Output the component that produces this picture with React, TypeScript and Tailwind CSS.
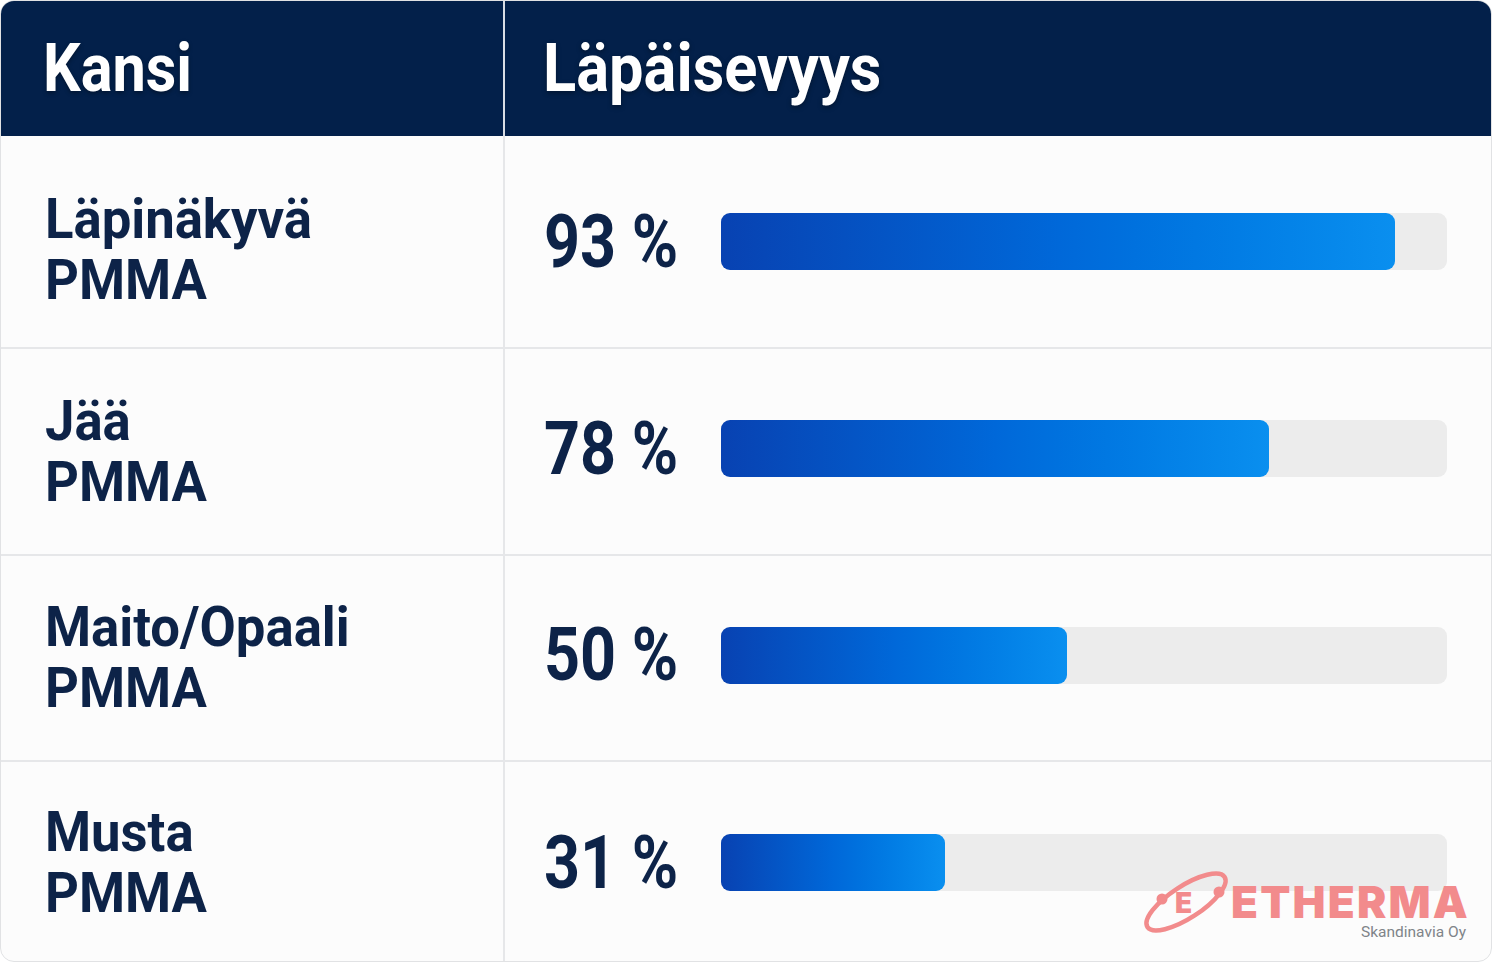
import React from "react";

const rows = [
  { l1: "Läpinäkyvä", l2: "PMMA", pct: "93 %", w: 92.8, h: "h-[213px]", lp: "pt-[16px]", rp: "" },
  { l1: "Jää", l2: "PMMA", pct: "78 %", w: 75.5, h: "h-[207px]", lp: "", rp: "pb-[6px]" },
  { l1: "Maito/Opaali", l2: "PMMA", pct: "50 %", w: 47.6, h: "h-[206px]", lp: "", rp: "pb-[6px]" },
  { l1: "Musta", l2: "PMMA", pct: "31 %", w: 30.9, h: "h-[201px]", lp: "", rp: "" },
];

function Logo() {
  return (
    <div className="absolute left-[1139px] top-[859px] w-[330px] h-[85px]">
      <svg width="100" height="80" viewBox="0 0 100 80" className="absolute left-0 top-0">
        <ellipse cx="46" cy="42" rx="46" ry="16" transform="rotate(-33 46 42)" fill="none" stroke="#f28b8c" strokeWidth="4.5" />
        <circle cx="22" cy="39" r="5.5" fill="#f28b8c" />
        <circle cx="79" cy="32" r="5.5" fill="#f28b8c" />
      </svg>
      <span className="absolute left-[35px] top-[29px] text-[28px] leading-none font-black text-[#f28b8c] [font-family:Inter,'Noto_Sans',sans-serif]">E</span>
      <span className="absolute left-[91px] top-[22px] text-[44px] leading-[40px] font-black tracking-[2.2px] text-[#f28b8c] [font-family:Inter,'Noto_Sans',sans-serif]">ETHERMA</span>
      <span className="absolute right-[4px] top-[65px] text-[15.5px] leading-none text-[#7f8489] [font-family:Roboto,sans-serif] whitespace-nowrap">Skandinavia Oy</span>
    </div>
  );
}

export default function App() {
  return (
    <div className="w-[1492px] h-[962px] bg-white [font-family:Roboto,'Liberation_Sans',sans-serif]">
      <div className="relative w-[1492px] h-[962px] rounded-[14px] border border-[#e1e2e4] overflow-hidden bg-[#fcfcfc]">
        <div className="flex h-[135px] bg-[#03204a] text-white">
          <div className="w-[504px] shrink-0 border-r-2 border-[#d8dce4] flex items-center pl-[42px]">
            <span className="inline-block origin-left scale-x-[0.9] text-[66px] font-bold leading-none [text-shadow:0_2px_5px_rgba(0,0,0,0.35)]">Kansi</span>
          </div>
          <div className="flex-1 flex items-center pl-[38px]">
            <span className="inline-block origin-left scale-x-[0.93] text-[66px] font-bold leading-none [text-shadow:0_2px_5px_rgba(0,0,0,0.35)]">Läpäisevyys</span>
          </div>
        </div>
        {rows.map((r, i) => (
          <div key={i} className={`flex ${r.h} ${i < rows.length - 1 ? "border-b-2 border-[#e6e7e9]" : ""}`}>
            <div className={`w-[504px] shrink-0 border-r-2 border-[#e6e7e9] flex flex-col justify-center pl-[44px] text-[#0d2348] ${r.lp}`}>
              <span className="inline-block origin-left scale-x-[0.94] text-[56px] font-bold leading-[61px] whitespace-nowrap">{r.l1}</span>
              <span className="inline-block origin-left scale-x-[0.94] text-[56px] font-bold leading-[61px]">{r.l2}</span>
            </div>
            <div className={`flex-1 flex items-center pl-[39px] pr-[44px] ${r.rp}`}>
              <div className="w-[177px] shrink-0">
                <span className="inline-block origin-left scale-x-[0.85] text-[74px] font-bold leading-none text-[#0d2348] whitespace-nowrap">{r.pct}</span>
              </div>
              <div className="flex-1 h-[57px] rounded-[9px] bg-[#ececec]">
                <div
                  className="h-full rounded-[9px] bg-gradient-to-r from-[#0842b2] via-[#0068d9] to-[#0a8fef]"
                  style={{ width: `${r.w}%` }}
                />
              </div>
            </div>
          </div>
        ))}
        <Logo />
      </div>
    </div>
  );
}
